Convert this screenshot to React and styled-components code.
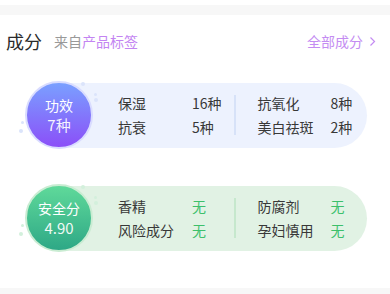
import React from "react";
import styled, { createGlobalStyle } from "styled-components";

const Global = createGlobalStyle`
  html, body { margin: 0; padding: 0; background: #fff; }
  body { font-family: "Noto Sans CJK SC", "Noto Sans", sans-serif; }
`;

const Page = styled.div`
  width: 390px;
  height: 294px;
  display: flex;
  flex-direction: column;
  background: #fff;
`;

const Band = styled.div`
  height: ${(p) => p.$h}px;
  margin-top: ${(p) => p.$mt || 0}px;
  background: #f7f7f7;
  flex-shrink: 0;
`;

const Header = styled.div`
  height: 52px;
  display: flex;
  align-items: center;
  padding: 0 14px 0 6px;
`;

const Title = styled.span`
  font-size: 18px;
  color: #2a2a2a;
  margin-right: 12px;
`;

const Source = styled.span`
  font-size: 14px;
  color: #999;
  flex: 1;
`;

const Accent = styled.span`
  color: #c384f2;
`;

const AllLink = styled.span`
  font-size: 14px;
  color: #c48cf2;
  display: flex;
  align-items: center;
  gap: 6px;
`;

const Body = styled.div`
  flex: 1;
  display: flex;
  flex-direction: column;
  gap: 35px;
  padding: 14px 0 0 25px;
`;

const Card = styled.div`
  display: flex;
  align-items: center;
`;

const BadgeWrap = styled.div`
  position: relative;
  width: 68px;
  height: 68px;
  flex-shrink: 0;
  z-index: 1;
`;

const Badge = styled.div`
  width: 68px;
  height: 68px;
  box-sizing: border-box;
  border-radius: 50%;
  border: 2px solid ${(p) => p.$ring};
  background: linear-gradient(180deg, ${(p) => p.$top}, ${(p) => p.$bottom});
  display: flex;
  flex-direction: column;
  align-items: center;
  justify-content: center;
  color: #fff;
`;

const BadgeTitle = styled.div`
  font-size: 14px;
  line-height: 19px;
`;

const BadgeValue = styled.div`
  font-size: 15px;
  line-height: 20px;
  opacity: 0.92;
`;

const Dot = styled.span`
  position: absolute;
  border-radius: 50%;
  background: ${(p) => p.$c};
  width: ${(p) => p.$s}px;
  height: ${(p) => p.$s}px;
  left: ${(p) => p.$x}px;
  top: ${(p) => p.$y}px;
`;

const Pill = styled.div`
  margin-left: -34px;
  width: 308px;
  height: 65px;
  box-sizing: border-box;
  padding-left: 59px;
  border-radius: 0 33px 33px 0;
  background: ${(p) => p.$bg};
  display: flex;
  align-items: center;
`;

const Column = styled.div`
  display: grid;
  grid-template-columns: ${(p) => p.$label}px auto;
  width: ${(p) => p.$w}px;
  font-size: 14px;
  line-height: 24px;
  color: #383838;
`;

const Divider = styled.div`
  width: 1.5px;
  height: 40px;
  background: ${(p) => p.$c};
  margin-right: 22px;
`;

const Value = styled.span`
  color: ${(p) => p.$c || "#333"};
`;

const Chevron = () => (
  <svg width="7" height="11" viewBox="0 0 7 11" fill="none">
    <path d="M1.5 1.5L5.5 5.5L1.5 9.5" stroke="#c48cf2" strokeWidth="1.2" />
  </svg>
);

const cards = [
  {
    title: "功效",
    value: "7种",
    top: "#7aa0ff",
    bottom: "#8b4ff8",
    ring: "#d9dcff",
    dot: "#dbe4fb",
    bg: "#edf2fe",
    divider: "#d7e2f8",
    valueColor: "#383838",
    left: [["保湿", "16种"], ["抗衰", "5种"]],
    right: [["抗氧化", "8种"], ["美白祛斑", "2种"]],
  },
  {
    title: "安全分",
    value: "4.90",
    top: "#5fd99a",
    bottom: "#2ea886",
    ring: "#c9ecd2",
    dot: "#d3f0dc",
    bg: "#e1f2e4",
    divider: "#c6e8cd",
    valueColor: "#3cc06b",
    left: [["香精", "无"], ["风险成分", "无"]],
    right: [["防腐剂", "无"], ["孕妇慎用", "无"]],
  },
];

export default function App() {
  return (
    <Page>
      <Global />
      <Band $h={10} $mt={5} />
      <Header>
        <Title>成分</Title>
        <Source>
          来自<Accent>产品标签</Accent>
        </Source>
        <AllLink>
          全部成分 <Chevron />
        </AllLink>
      </Header>
      <Body>
        {cards.map((c) => (
          <Card key={c.title}>
            <BadgeWrap>
              <Dot $c={c.dot} $s={4} $x={56} $y={1} />
              <Dot $c={c.dot} $s={3} $x={69} $y={12} />
              <Dot $c={c.dot} $s={4} $x={69} $y={17} />
              <Dot $c={c.dot} $s={3} $x={-4} $y={40} />
              <Dot $c={c.dot} $s={4} $x={-6} $y={48} />
              <Badge $top={c.top} $bottom={c.bottom} $ring={c.ring}>
                <BadgeTitle>{c.title}</BadgeTitle>
                <BadgeValue>{c.value}</BadgeValue>
              </Badge>
            </BadgeWrap>
            <Pill $bg={c.bg}>
              <Column $label={74} $w={116}>
                {c.left.map(([k, v]) => (
                  <React.Fragment key={k}>
                    <span>{k}</span>
                    <Value $c={c.valueColor}>{v}</Value>
                  </React.Fragment>
                ))}
              </Column>
              <Divider $c={c.divider} />
              <Column $label={73} $w={100}>
                {c.right.map(([k, v]) => (
                  <React.Fragment key={k}>
                    <span>{k}</span>
                    <Value $c={c.valueColor}>{v}</Value>
                  </React.Fragment>
                ))}
              </Column>
            </Pill>
          </Card>
        ))}
      </Body>
      <Band $h={6} />
    </Page>
  );
}
